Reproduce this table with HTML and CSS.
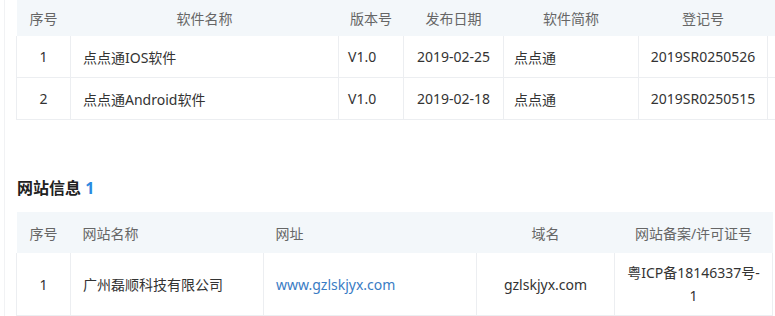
FILE: index.html
```html
<!DOCTYPE html>
<html lang="zh-CN">
<head>
<meta charset="utf-8">
<title>软件著作权 / 网站信息</title>
<link rel="stylesheet" href="styles.css">
</head>
<body>
<div class="wrap">
  <table class="grid soft">
    <colgroup>
      <col class="c-idx"><col class="c-sname"><col class="c-ver"><col class="c-date"><col class="c-short"><col class="c-reg"><col class="c-more">
    </colgroup>
    <thead>
      <tr>
        <th class="center">序号</th>
        <th class="center">软件名称</th>
        <th class="center">版本号</th>
        <th class="center">发布日期</th>
        <th class="center">软件简称</th>
        <th class="center">登记号</th>
        <th class="center"></th>
      </tr>
    </thead>
    <tbody>
      <tr>
        <td class="center">1</td>
        <td class="left">点点通IOS软件</td>
        <td class="left">V1.0</td>
        <td class="center">2019-02-25</td>
        <td class="left">点点通</td>
        <td class="center">2019SR0250526</td>
        <td></td>
      </tr>
      <tr>
        <td class="center">2</td>
        <td class="left">点点通Android软件</td>
        <td class="left">V1.0</td>
        <td class="center">2019-02-18</td>
        <td class="left">点点通</td>
        <td class="center">2019SR0250515</td>
        <td></td>
      </tr>
    </tbody>
  </table>

  <h2 class="section-title">网站信息 <span class="count">1</span></h2>

  <table class="grid site">
    <colgroup>
      <col class="w-idx"><col class="w-name"><col class="w-url"><col class="w-domain"><col class="w-icp">
    </colgroup>
    <thead>
      <tr>
        <th class="center">序号</th>
        <th class="left">网站名称</th>
        <th class="left">网址</th>
        <th class="center">域名</th>
        <th class="center">网站备案/许可证号</th>
      </tr>
    </thead>
    <tbody>
      <tr>
        <td class="center">1</td>
        <td class="left">广州磊顺科技有限公司</td>
        <td class="left"><a class="link" href="#">www.gzlskjyx.com</a></td>
        <td class="center">gzlskjyx.com</td>
        <td class="center icp">粤ICP备18146337号-<br>1</td>
      </tr>
    </tbody>
  </table>
</div>
</body>
</html>
```

FILE: styles.css
```css
html, body {
  margin: 0;
  padding: 0;
  background: #ffffff;
}

body {
  width: 775px;
  height: 316px;
  overflow: hidden;
  font-family: "Noto Sans", "Noto Sans CJK SC", sans-serif;
  font-size: 14px;
  color: #333333;
}

.wrap {
  margin-left: 4px;
  padding-left: 11px;
  border-left: 1px solid #f1f2f4;
  height: 316px;
  overflow: hidden;
}

.grid {
  border-collapse: collapse;
  table-layout: fixed;
}

.grid th {
  background: #f3f7fa;
  color: #666666;
  font-weight: normal;
  white-space: nowrap;
  padding: 0 10px;
}

.grid td {
  border-bottom: 1px solid #eceef1;
  border-left: 1px solid #eceef1;
  border-right: 1px solid #eceef1;
  padding: 0 10px;
  white-space: nowrap;
}

.center { text-align: center; }
.left { text-align: left; }

/* software table */
.soft { width: 851px; }
.soft thead th { height: 36px; }
.soft tbody td { height: 41px; }
.soft .c-idx { width: 54px; }
.soft .c-sname { width: 268px; }
.soft .c-ver { width: 65px; }
.soft .c-date { width: 100px; }
.soft .c-short { width: 135px; }
.soft .c-reg { width: 129px; }
.soft .c-more { width: 100px; }
.soft td.left:nth-child(2) { padding-left: 12px; }
.soft td.left:nth-child(3) { padding-left: 9px; }

.section-title {
  margin: 56px 0 12px 1px;
  font-size: 16px;
  line-height: 24px;
  font-weight: bold;
  color: #222222;
}

.section-title .count {
  color: #2b8ae0;
}

/* website table */
.site { width: 756px; }
.site thead th { height: 41px; }
.site tbody td {
  height: 44px;
  padding-top: 8px;
  padding-bottom: 8px;
  line-height: 23px;
}
.site .w-idx { width: 54px; }
.site .w-name { width: 193px; }
.site .w-url { width: 213px; }
.site .w-domain { width: 138px; }
.site .w-icp { width: 158px; }
.site th.left, .site td.left { padding-left: 12px; }

.link {
  color: #3a7cc4;
  text-decoration: none;
}

.icp { white-space: normal; }
```
